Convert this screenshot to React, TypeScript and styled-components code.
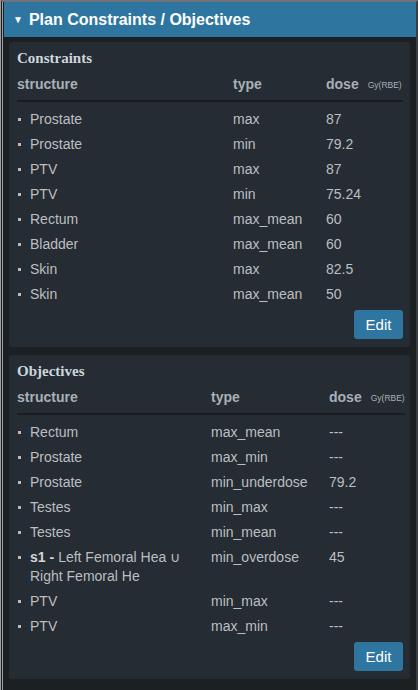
import React from "react";
import styled, { createGlobalStyle } from "styled-components";

type Row = {
  structure: string;
  type: string;
  dose: string;
  prefix?: string;
};

const constraints: Row[] = [
  { structure: "Prostate", type: "max", dose: "87" },
  { structure: "Prostate", type: "min", dose: "79.2" },
  { structure: "PTV", type: "max", dose: "87" },
  { structure: "PTV", type: "min", dose: "75.24" },
  { structure: "Rectum", type: "max_mean", dose: "60" },
  { structure: "Bladder", type: "max_mean", dose: "60" },
  { structure: "Skin", type: "max", dose: "82.5" },
  { structure: "Skin", type: "max_mean", dose: "50" },
];

const objectives: Row[] = [
  { structure: "Rectum", type: "max_mean", dose: "---" },
  { structure: "Prostate", type: "max_min", dose: "---" },
  { structure: "Prostate", type: "min_underdose", dose: "79.2" },
  { structure: "Testes", type: "min_max", dose: "---" },
  { structure: "Testes", type: "min_mean", dose: "---" },
  {
    prefix: "s1 -",
    structure: "Left Femoral Hea \u222A Right Femoral He",
    type: "min_overdose",
    dose: "45",
  },
  { structure: "PTV", type: "min_max", dose: "---" },
  { structure: "PTV", type: "max_min", dose: "---" },
];

const GlobalStyle = createGlobalStyle`
  html, body {
    margin: 0;
    padding: 0;
    background: #1d2023;
  }
  body {
    font-family: "Liberation Sans", Arial, sans-serif;
  }
`;

const Frame = styled.div`
  width: 418px;
  min-height: 690px;
  box-sizing: border-box;
  border-top: 2px solid #6f7378;
  border-left: 3px double #9a9ea2;
  border-right: 2px solid #3a3e42;
  padding-left: 1px;
  background: #1d2023;
`;

const Header = styled.div`
  height: 35px;
  display: flex;
  align-items: center;
  gap: 6px;
  padding-left: 9px;
  background: #2e76a0;
  color: #fff;
  font-size: 16px;
  font-weight: bold;
`;

const Caret = styled.span`
  font-size: 10px;
  line-height: 1;
  margin-top: 1px;
`;

const Body = styled.div`
  display: flex;
  flex-direction: column;
  gap: 8px;
  padding: 5px 6px 5px 5px;
`;

const Panel = styled.section`
  background: #252c33;
  border-radius: 3px;
  padding: 8px 7px 8px 8px;
  display: flex;
  flex-direction: column;
`;

const Heading = styled.h3`
  margin: 0;
  font-family: "Liberation Serif", "Times New Roman", serif;
  font-weight: bold;
  font-size: 15px;
  line-height: 17px;
  color: #cdd7de;
`;

const Grid = styled.div<{ $cols: string }>`
  display: grid;
  grid-template-columns: ${({ $cols }) => $cols};
  margin-top: 5px;
`;

const HeadCell = styled.div`
  font-weight: bold;
  font-size: 14px;
  line-height: 18px;
  color: #a9b0b7;
  padding: 3px 0 6px;
  border-bottom: 2px solid #1a1d20;
  margin-bottom: 5px;
  white-space: nowrap;
`;

const Unit = styled.span`
  font-size: 8.5px;
  font-weight: normal;
  margin-left: 9px;
  vertical-align: 1px;
`;

const Cell = styled.div`
  font-size: 14px;
  line-height: 19px;
  color: #bcbfc2;
  padding: 3px 0;
`;

const StructureCell = styled(Cell)`
  display: flex;
  align-items: flex-start;
  padding-right: 12px;
`;

const Bullet = styled.span`
  flex: none;
  width: 3px;
  height: 3px;
  margin: 8px 9px 0 1px;
  background: #b8bbbe;
`;

const Prefix = styled.b`
  color: #d4d7da;
  margin-right: 4px;
`;

const Actions = styled.div`
  display: flex;
  justify-content: flex-end;
  margin-top: 3px;
`;

const EditButton = styled.button`
  width: 49px;
  height: 29px;
  border: none;
  border-radius: 3px;
  background: #2e76a0;
  color: #fff;
  font-family: "Liberation Sans", Arial, sans-serif;
  font-size: 15px;
  cursor: pointer;
`;

const Table = ({
  title,
  rows,
  cols,
}: {
  title: string;
  rows: Row[];
  cols: string;
}) => (
  <Panel>
    <Heading>{title}</Heading>
    <Grid $cols={cols}>
      <HeadCell>structure</HeadCell>
      <HeadCell>type</HeadCell>
      <HeadCell>
        dose<Unit>Gy(RBE)</Unit>
      </HeadCell>
      {rows.map((r, i) => (
        <React.Fragment key={i}>
          <StructureCell>
            <Bullet />
            <span>
              {r.prefix && <Prefix>{r.prefix}</Prefix>}
              {r.structure}
            </span>
          </StructureCell>
          <Cell>{r.type}</Cell>
          <Cell>{r.dose}</Cell>
        </React.Fragment>
      ))}
    </Grid>
    <Actions>
      <EditButton>Edit</EditButton>
    </Actions>
  </Panel>
);

export default function App() {
  return (
    <>
      <GlobalStyle />
      <Frame>
        <Header>
          <Caret>▼</Caret>
          <span>Plan Constraints / Objectives</span>
        </Header>
        <Body>
          <Table title="Constraints" rows={constraints} cols="216px 93px 1fr" />
          <Table title="Objectives" rows={objectives} cols="194px 118px 1fr" />
        </Body>
      </Frame>
    </>
  );
}
